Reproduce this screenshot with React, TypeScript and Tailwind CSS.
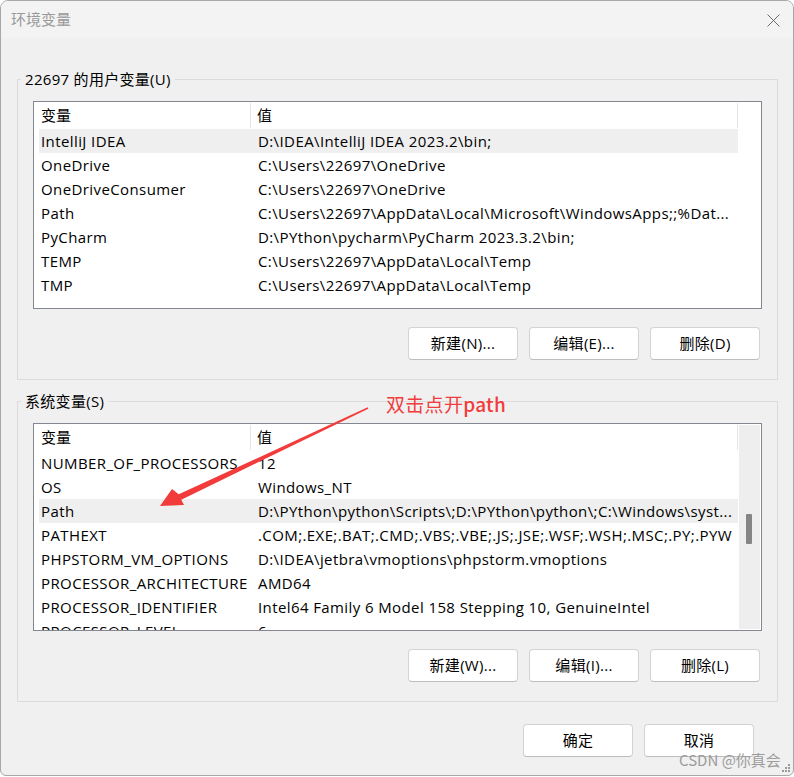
import React from 'react';

type Row = [string, string];

const userVars: Row[] = [
    ['IntelliJ IDEA', 'D:\\IDEA\\IntelliJ IDEA 2023.2\\bin;'],
    ['OneDrive', 'C:\\Users\\22697\\OneDrive'],
    ['OneDriveConsumer', 'C:\\Users\\22697\\OneDrive'],
    ['Path', 'C:\\Users\\22697\\AppData\\Local\\Microsoft\\WindowsApps;;%Dat...'],
    ['PyCharm', 'D:\\PYthon\\pycharm\\PyCharm 2023.3.2\\bin;'],
    ['TEMP', 'C:\\Users\\22697\\AppData\\Local\\Temp'],
    ['TMP', 'C:\\Users\\22697\\AppData\\Local\\Temp'],
];

const sysVars: Row[] = [
    ['NUMBER_OF_PROCESSORS', '12'],
    ['OS', 'Windows_NT'],
    ['Path', 'D:\\PYthon\\python\\Scripts\\;D:\\PYthon\\python\\;C:\\Windows\\syst...'],
    ['PATHEXT', '.COM;.EXE;.BAT;.CMD;.VBS;.VBE;.JS;.JSE;.WSF;.WSH;.MSC;.PY;.PYW'],
    ['PHPSTORM_VM_OPTIONS', 'D:\\IDEA\\jetbra\\vmoptions\\phpstorm.vmoptions'],
    ['PROCESSOR_ARCHITECTURE', 'AMD64'],
    ['PROCESSOR_IDENTIFIER', 'Intel64 Family 6 Model 158 Stepping 10, GenuineIntel'],
    ['PROCESSOR_LEVEL', '6'],
];

const WinButton: React.FC<{ label: string }> = ({ label }) => (
    <button className="w-[110px] h-[33px] bg-white border border-[#d3d3d3] border-b-[#bdbdbd] rounded-[4px] text-[15px] text-black leading-none tracking-[0.3px]">
        {label}
    </button>
);

const VarList: React.FC<{ rows: Row[]; selected: number; scrollbar?: boolean }> = ({ rows, selected, scrollbar }) => (
    <div className="h-[208px] border border-[#828790] bg-white flex">
        <div className="w-[704px] flex flex-col overflow-hidden tracking-[0.4px]">
            {/* Header */}
            <div className="h-[27px] shrink-0 flex items-center tracking-normal">
                <div className="w-[216px] pl-[7px]">变量</div>
                <div className="w-px h-[25px] bg-[#e5e5e5]" />
                <div className="flex-1 pl-[6px]">值</div>
                <div className="w-px h-[25px] bg-[#e5e5e5]" />
            </div>
            {rows.map(([name, value], i) => (
                <div
                    key={name}
                    className={`ml-[5px] w-[699px] h-[24px] shrink-0 flex items-center leading-[24px] ${i === selected ? 'bg-[#efefef]' : ''}`}
                >
                    <div className="w-[212px] pl-[2px] whitespace-nowrap overflow-hidden">{name}</div>
                    <div className="flex-1 pl-[7px] whitespace-nowrap overflow-hidden text-ellipsis">{value}</div>
                </div>
            ))}
        </div>
        <div className="flex-1 p-px">
            {scrollbar && (
                <div className="h-full bg-[#eeeeee] relative">
                    <div className="absolute left-[7px] top-[89px] w-[6px] h-[30px] bg-[#858585] rounded-[1px]" />
                </div>
            )}
        </div>
    </div>
);

const GroupBox: React.FC<{ title: string; children: React.ReactNode }> = ({ title, children }) => (
    <div className="relative border border-[#dcdcdc] pt-[21px] pb-[19px] pl-[15px] pr-[15px]">
        <span className="absolute left-[3px] -top-[11px] px-[4px] bg-[#f0f0f0] leading-[20px] tracking-[0.3px]">{title}</span>
        {children}
    </div>
);

export default function App() {
    return (
        <div className="w-[794px] h-[777px] bg-white relative overflow-hidden font-['Open_Sans','Noto_Sans_CJK_SC',sans-serif] text-[15px] text-black">
            {/* Window */}
            <div className="w-[794px] h-[776px] bg-[#f0f0f0] border border-[#a8a8a8] rounded-t-[8px] rounded-b-[6px] overflow-hidden flex flex-col">
                {/* Title bar */}
                <div className="h-[37px] shrink-0 bg-[#f3f3f3] flex items-center justify-between pl-[10px] pr-[13px]">
                    <span className="text-[#9a9a9a] font-['Noto_Sans_CJK_SC',sans-serif]">环境变量</span>
                    <svg width="13" height="13" viewBox="0 0 13 13" className="mt-[1px]">
                        <path d="M0.5 0.5 L12.5 12.5 M12.5 0.5 L0.5 12.5" stroke="#6a6a6a" strokeWidth="1" />
                    </svg>
                </div>

                <div className="pl-[16px] pr-[15px] pt-[41px] flex flex-col">
                    <GroupBox title="22697 的用户变量(U)">
                        <VarList rows={userVars} selected={0} />
                        <div className="mt-[18px] flex justify-end gap-[11px] pr-[2px]">
                            <WinButton label="新建(N)..." />
                            <WinButton label="编辑(E)..." />
                            <WinButton label="删除(D)" />
                        </div>
                    </GroupBox>

                    <div className="mt-[21px]">
                        <GroupBox title="系统变量(S)">
                            <VarList rows={sysVars} selected={2} scrollbar />
                            <div className="mt-[18px] flex justify-end gap-[11px] pr-[2px]">
                                <WinButton label="新建(W)..." />
                                <WinButton label="编辑(I)..." />
                                <WinButton label="删除(L)" />
                            </div>
                        </GroupBox>
                    </div>

                    <div className="mt-[22px] flex justify-end gap-[11px] pr-[24px]">
                        <WinButton label="确定" />
                        <WinButton label="取消" />
                    </div>
                </div>
            </div>

            {/* Annotation */}
            <span className="absolute left-[386px] top-[392px] text-[19px] leading-[24px] text-[#f03c3c] font-['Noto_Sans_CJK_SC',sans-serif] tracking-[0.3px]">
                双击点开<span className="font-medium">path</span>
            </span>
            <svg className="absolute inset-0 pointer-events-none" width="794" height="777">
                <polygon
                    points="160,506 172,489 178.7,494.3 367.7,407.3 368.3,408.7 181.3,499.7 184,505"
                    fill="#f23c3c"
                />
            </svg>

            {/* Watermark */}
            <span className="absolute left-[679px] top-[750px] text-[15px] leading-[20px] text-[#9c9c9c] font-['Noto_Sans_CJK_SC',sans-serif]">
                CSDN @你真会
            </span>
            <svg className="absolute left-[782px] top-[764px]" width="9" height="9" viewBox="0 0 9 9">
                <rect x="6" y="0" width="2" height="2" fill="#9a9a9a" />
                <rect x="3" y="3" width="2" height="2" fill="#9a9a9a" />
                <rect x="6" y="3" width="2" height="2" fill="#9a9a9a" />
                <rect x="0" y="6" width="2" height="2" fill="#9a9a9a" />
                <rect x="3" y="6" width="2" height="2" fill="#9a9a9a" />
                <rect x="6" y="6" width="2" height="2" fill="#9a9a9a" />
            </svg>
        </div>
    );
}
